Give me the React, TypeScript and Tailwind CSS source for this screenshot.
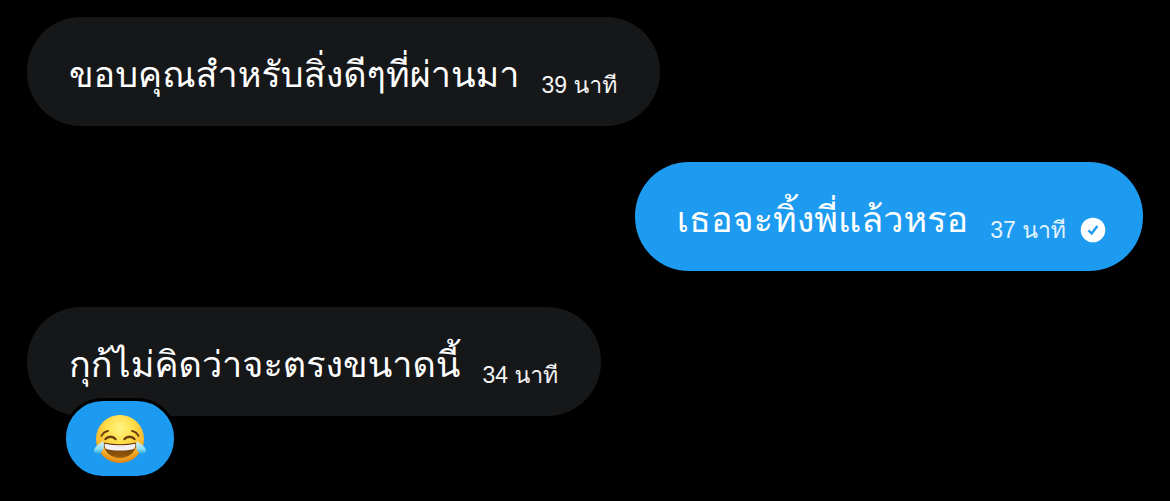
import type { ReactNode } from 'react'
import clsx from 'clsx'

interface Message {
  id: number
  text: string
  time: string
  mine?: boolean
  reaction?: ReactNode
}

function JoyFace() {
  return (
    <svg viewBox="0 0 54 50" className="h-[50px] w-[54px]" aria-hidden="true">
      <defs>
        <radialGradient id="face" cx="0.5" cy="0.28" r="0.74">
          <stop offset="0" stopColor="#fff385" />
          <stop offset="0.4" stopColor="#fedd48" />
          <stop offset="0.75" stopColor="#f9b42c" />
          <stop offset="1" stopColor="#dd7d10" />
        </radialGradient>
        <linearGradient id="tear" x1="0" y1="0" x2="0" y2="1">
          <stop offset="0" stopColor="#d5f5fb" />
          <stop offset="0.6" stopColor="#8adcf3" />
          <stop offset="1" stopColor="#25a9e8" />
        </linearGradient>
        <linearGradient id="mouth" x1="0" y1="0" x2="0" y2="1">
          <stop offset="0" stopColor="#5c300a" />
          <stop offset="1" stopColor="#9a5f0c" />
        </linearGradient>
      </defs>
      <circle cx="27" cy="25" r="24" fill="url(#face)" />
      <g fill="none" stroke="#6b3f0c" strokeLinecap="round">
        <path d="M8.500 22c1.200-2.600 3.200-4.400 6.500-5" strokeWidth="1.800" />
        <path d="M45.500 22c-1.200-2.600-3.200-4.400-6.500-5" strokeWidth="1.800" />
        <path d="M12.500 25c2.600-3 7.400-3 10 .1" strokeWidth="2.400" />
        <path d="M41.500 25c-2.600-3-7.400-3-10 .1" strokeWidth="2.400" />
      </g>
      <path d="M10.500 28.500c10.800 2.200 22.200 2.200 33 0c-.2 9-7 15.500-16.500 15.500s-16.300-6.500-16.500-15.500z" fill="url(#mouth)" />
      <path d="M11.500 29.700c10.200 2 20.800 2 31 0c-.1 2.100-.6 3.900-1.500 5.300c-9 2-19 2-28 0c-.9-1.400-1.400-3.200-1.500-5.300z" fill="#f5f1f3" />
      <path d="M10.500 27.500c.9 4.500.2 8.600-2.800 11.300c-2.700 2.200-7 .8-6.700-2.600c.3-3.200 5.500-6.700 9.500-8.700z" fill="url(#tear)" />
      <path d="M43.500 27.500c-.9 4.500-.2 8.600 2.800 11.300c2.700 2.200 7 .8 6.700-2.600c-.3-3.200-5.500-6.700-9.500-8.700z" fill="url(#tear)" />
    </svg>
  )
}

function SentCheck() {
  return (
    <svg viewBox="0 0 26 26" className="size-[26px] shrink-0" role="img" aria-label="ส่งแล้ว">
      <circle cx="13" cy="13" r="12.300" fill="#fff" />
      <path d="M8.500 13.400l3.200 3.100l5.700-7.400" fill="none" stroke="#1d9bf0" strokeWidth="2.400" />
    </svg>
  )
}

const messages: Message[] = [
  { id: 1, text: 'ขอบคุณสำหรับสิ่งดีๆที่ผ่านมา', time: '39 นาที' },
  { id: 2, text: 'เธอจะทิ้งพี่แล้วหรอ', time: '37 นาที', mine: true },
  { id: 3, text: 'กุก้ไม่คิดว่าจะตรงขนาดนี้', time: '34 นาที', reaction: <JoyFace /> },
]

function Bubble({ text, time, mine, reaction }: Message) {
  return (
    <li className={clsx('relative flex', mine ? 'justify-end' : 'justify-start')}>
      <div className={clsx(
        'flex items-end gap-[22px] rounded-[54px] pt-[30px] pb-[23px] pl-[42px] whitespace-nowrap text-white',
        mine ? 'bg-[#1d9bf0] pr-[37px]' : 'bg-[#161719] pr-[43px]',
      )}>
        <p className="font-['Loma','Noto_Sans_Thai_Looped',sans-serif] text-[36px] leading-[56px]">{text}</p>
        <div className="flex items-center gap-[14px]">
          <time className={clsx('text-[23px] leading-[36px]', mine ? 'text-[#e3f3fe]' : 'text-[#f4f4f4]')}>{time}</time>
          {mine && <SentCheck />}
        </div>
      </div>
      {reaction && (
        <button
          type="button"
          aria-label="😂"
          className="absolute top-[91px] left-9 flex h-[81px] w-[114px] cursor-pointer items-center justify-center rounded-[40px] border-[3px] border-black bg-[#1d9bf0]"
        >
          {reaction}
        </button>
      )}
    </li>
  )
}

export default function App() {
  return (
    <main className="min-h-screen bg-black px-[27px] pt-[17px] pb-[85px] font-['Liberation_Sans','Loma',sans-serif]">
      <ul className="flex flex-col gap-9">
        {messages.map(m => <Bubble key={m.id} {...m} />)}
      </ul>
    </main>
  )
}
